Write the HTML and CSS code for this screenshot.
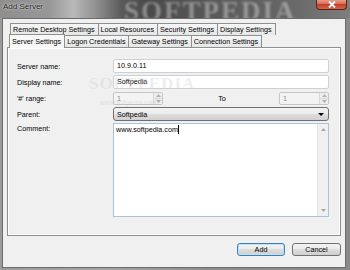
FILE: index.html
```html
<!DOCTYPE html>
<html>
<head>
<meta charset="utf-8">
<link rel="stylesheet" href="styles.css">
</head>
<body>
<div class="window">
  <div class="titlebar">
    <span class="title">Add Server</span>
    <span class="title-mark">SOFTPEDIA</span>
    <div class="close">
      <svg width="8" height="7" viewBox="0 0 8 7"><path d="M1 0.5 L7 6.5 M7 0.5 L1 6.5" stroke="#fff" stroke-width="1.8" fill="none"/></svg>
    </div>
  </div>
  <div class="client">
    <div class="tabs">
      <div class="tab-row row-back">
        <div class="tab">Remote Desktop Settings</div>
        <div class="tab">Local Resources</div>
        <div class="tab">Security Settings</div>
        <div class="tab">Display Settings</div>
      </div>
      <div class="tab-row row-front">
        <div class="tab selected">Server Settings</div>
        <div class="tab">Logon Credentials</div>
        <div class="tab">Gateway Settings</div>
        <div class="tab">Connection Settings</div>
      </div>
    </div>
    <div class="panel">
      <div class="form">
        <div class="label">Server name:</div>
        <div class="input">10.9.0.11</div>
        <div class="label">Display name:</div>
        <div class="input">Softpedia</div>
        <div class="label">'#' range:</div>
        <div class="range">
          <div class="spin">
            <span class="spin-val">1</span>
            <div class="spin-btns">
              <div class="spin-btn"><svg width="5" height="3" viewBox="0 0 5 3"><path d="M0 3 L2.5 0 L5 3 Z" fill="#b0b0b0"/></svg></div>
              <div class="spin-btn"><svg width="5" height="3" viewBox="0 0 5 3"><path d="M0 0 L2.5 3 L5 0 Z" fill="#b0b0b0"/></svg></div>
            </div>
          </div>
          <span class="to">To</span>
          <div class="spin">
            <span class="spin-val">1</span>
            <div class="spin-btns">
              <div class="spin-btn"><svg width="5" height="3" viewBox="0 0 5 3"><path d="M0 3 L2.5 0 L5 3 Z" fill="#b0b0b0"/></svg></div>
              <div class="spin-btn"><svg width="5" height="3" viewBox="0 0 5 3"><path d="M0 0 L2.5 3 L5 0 Z" fill="#b0b0b0"/></svg></div>
            </div>
          </div>
        </div>
        <div class="label">Parent:</div>
        <div class="combo">
          <span>Softpedia</span>
          <svg width="6" height="3" viewBox="0 0 6 3"><path d="M0 0 L6 0 L3 3 Z" fill="#000"/></svg>
        </div>
        <div class="label label-top">Comment:</div>
        <div class="textarea">
          <div class="text">www.softpedia.com<span class="caret"></span></div>
          <div class="scrollbar">
            <svg width="5" height="3" viewBox="0 0 5 3"><path d="M0 3 L2.5 0 L5 3 Z" fill="#a8a8a8"/></svg>
            <svg width="5" height="3" viewBox="0 0 5 3"><path d="M0 0 L2.5 3 L5 0 Z" fill="#a8a8a8"/></svg>
          </div>
        </div>
      </div>
      <span class="mark-big">SOFTPEDIA</span>
      <span class="mark-small">www.softpedia.com</span>
    </div>
    <div class="buttons">
      <div class="btn btn-default">Add</div>
      <div class="btn btn-cancel">Cancel</div>
    </div>
  </div>
</div>
</body>
</html>
```

FILE: styles.css
```css
* { box-sizing: border-box; }
html, body { margin: 0; padding: 0; }
body {
  width: 350px;
  height: 270px;
  overflow: hidden;
  font-family: "Liberation Sans", Arial, sans-serif;
  font-size: 7.2px;
  color: #000;
}
.window {
  width: 350px;
  height: 270px;
  display: flex;
  flex-direction: column;
  background: linear-gradient(90deg, #9c9c9c 0%, #a4a4a4 30%, #8e8e8e 60%, #8a8a8a 100%);
}
.titlebar {
  height: 18px;
  flex: none;
  display: flex;
  justify-content: space-between;
  align-items: flex-start;
  position: relative;
  overflow: hidden;
  background: linear-gradient(90deg, #8e8e8e 0%, #979797 14%, #b9b9b9 21%, #8c8c8c 28%, #585858 35%, #4a4a4a 42%, #5c5c5c 65%, #666 82%, #7e7e7e 100%);
}
.title {
  padding: 2px 0 0 3px;
  font-size: 8px;
  line-height: 10px;
  color: #111;
  text-shadow: 0 0 3px rgba(255,255,255,0.8), 0 0 1px rgba(255,255,255,0.8);
  position: relative;
  z-index: 1;
}
.title-mark {
  position: absolute;
  left: 124px;
  top: -4px;
  font-family: "Liberation Serif", "Times New Roman", serif;
  font-weight: bold;
  font-size: 27px;
  letter-spacing: 2px;
  line-height: 30px;
  color: rgba(235,235,235,0.4);
  filter: blur(0.8px);
}
.close {
  width: 31px;
  height: 11px;
  margin: -1px 3px 0 0;
  border: 1px solid #5a2418;
  border-top: none;
  border-radius: 0 0 4px 4px;
  background: linear-gradient(#e9a596 0%, #d9735e 45%, #c43f27 55%, #d0654b 100%);
  display: flex;
  align-items: center;
  justify-content: center;
  position: relative;
  z-index: 1;
}
.close svg { display: block; }
.client {
  flex: 1;
  margin: 0 4px 2px 2px;
  border: 1px solid #6c6c6c;
  background: #f0f0f0;
  padding: 4px 4px 11px 4px;
  display: flex;
  flex-direction: column;
}
.tabs {
  height: 24px;
  flex: none;
  display: flex;
  flex-direction: column;
}
.tab-row {
  height: 12px;
  display: flex;
  align-items: flex-end;
}
.row-back { margin-left: 3px; }
.row-front { margin-left: 2px; }
.tab {
  height: 12px;
  padding: 0 3px 0 2px;
  border: 1px solid #8e8f8f;
  border-bottom: none;
  margin-left: -1px;
  background: linear-gradient(#f6f6f6, #e6e6e6);
  line-height: 11px;
  white-space: nowrap;
}
.tab:first-child { margin-left: 0; }
.tab.selected {
  height: 14px;
  margin-top: -1px;
  margin-bottom: -1px;
  padding-top: 1px;
  background: #f7f7f7;
  position: relative;
  z-index: 1;
}
.panel {
  flex: 1;
  border: 1px solid #8e8f8f;
  box-shadow: inset 1px 1px 0 #fff, inset -1px -1px 0 #fff;
  background: #f0f0f0;
  padding: 11px 11px 0 9px;
  position: relative;
}
.form {
  display: grid;
  grid-template-columns: 96px 216px;
  grid-auto-rows: 14px;
  row-gap: 2px;
}
.label {
  display: flex;
  align-items: center;
}
.input {
  height: 14px;
  border: 1px solid #cdd1d6;
  border-radius: 2px;
  background: #fff;
  padding: 0 3px;
  line-height: 12px;
}
.range {
  display: flex;
  justify-content: space-between;
  align-items: center;
}
.spin {
  width: 50px;
  height: 13px;
  border: 1px solid #c6c6c6;
  border-radius: 2px;
  background: #f3f3f3;
  display: flex;
  justify-content: space-between;
}
.spin-val {
  color: #8a8a8a;
  padding-left: 3px;
  line-height: 11px;
}
.spin-btns {
  width: 9px;
  display: flex;
  flex-direction: column;
  border-left: 1px solid #d8d8d8;
}
.spin-btn {
  flex: 1;
  display: flex;
  align-items: center;
  justify-content: center;
  background: #ededed;
}
.spin-btn + .spin-btn { border-top: 1px solid #d8d8d8; }
.spin-btn svg { display: block; }
.to { margin-left: 2px; }
.combo {
  height: 14px;
  border: 1px solid #707070;
  border-radius: 3px;
  background: linear-gradient(#f3f3f3 0%, #ebebeb 48%, #dedede 52%, #d0d0d0 100%);
  padding: 0 4px 0 3px;
  display: flex;
  justify-content: space-between;
  align-items: center;
}
.combo svg { display: block; }
.label-top { align-items: flex-start; padding-top: 1px; }
.form .textarea {
  grid-row: span 6;
  height: 94px;
  border: 1px solid #a9c4e2;
  background: #fff;
  display: flex;
  justify-content: space-between;
}
.text {
  padding: 1px 2px;
  line-height: 10px;
  display: flex;
  align-items: flex-start;
}
.caret {
  display: inline-block;
  width: 1px;
  height: 9px;
  background: #000;
  margin-left: 0.5px;
}
.scrollbar {
  width: 11px;
  background: #f0f0f0;
  border-left: 1px solid #e4e4e4;
  display: flex;
  flex-direction: column;
  justify-content: space-between;
  align-items: center;
  padding: 4px 0 4px;
}
.scrollbar svg { display: block; }
.mark-big {
  position: absolute;
  left: 81px;
  top: 26px;
  font-family: "Liberation Serif", "Times New Roman", serif;
  font-weight: bold;
  font-size: 17px;
  letter-spacing: 1px;
  color: rgba(205,205,205,0.35);
  pointer-events: none;
}
.mark-small {
  position: absolute;
  left: 92px;
  top: 51px;
  font-size: 6.5px;
  color: rgba(180,180,180,0.35);
  pointer-events: none;
}
.buttons {
  margin-top: 7px;
  height: 13px;
  flex: none;
  display: flex;
  justify-content: flex-end;
  gap: 7px;
}
.btn {
  height: 13px;
  border: 1px solid #707070;
  border-radius: 3px;
  background: linear-gradient(#f3f3f3 0%, #ebebeb 45%, #dddddd 50%, #cfcfcf 100%);
  display: flex;
  align-items: center;
  justify-content: center;
}
.btn-default {
  width: 48px;
  border-color: #3c7fb1;
  box-shadow: inset 0 0 0 1px #bfe2f6;
}
.btn-cancel { width: 49px; }
```
